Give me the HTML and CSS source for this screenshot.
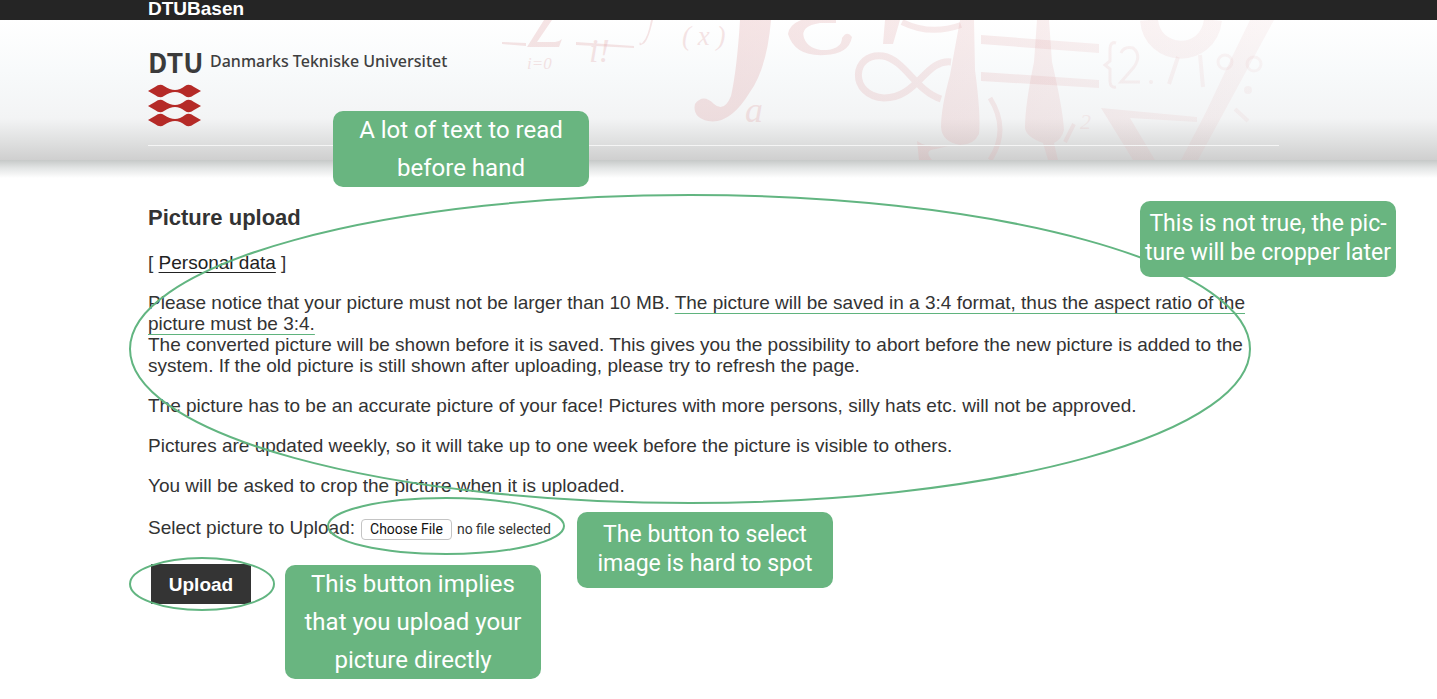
FILE: index.html
```html
<!DOCTYPE html>
<html lang="en">
<head>
<meta charset="utf-8">
<title>DTUBasen - Picture upload</title>
<link rel="stylesheet" href="styles.css">
</head>
<body>
<div class="topbar">DTUBasen</div>
<header class="banner">
  <svg class="banner-art" width="900" height="140" viewBox="500 20 900 140" aria-hidden="true">
    <defs>
      <linearGradient id="fade" gradientUnits="userSpaceOnUse" x1="500" y1="0" x2="1300" y2="0">
        <stop offset="0" stop-color="#dfa5a7" stop-opacity="0.3"/>
        <stop offset="0.3" stop-color="#dfa5a7" stop-opacity="0.3"/>
        <stop offset="0.65" stop-color="#dfa5a7" stop-opacity="0.2"/>
        <stop offset="0.8" stop-color="#dfa5a7" stop-opacity="0.14"/>
        <stop offset="1" stop-color="#dfa5a7" stop-opacity="0.09"/>
      </linearGradient>
    </defs>
    <g fill="url(#fade)">
      <path d="M546 20h6l-15 22h18q4 0 7-3l-3 8h-32l17-27z"/>
      <path d="M502 42l24 1v3l-24-2zM576 42l58 4v2l-58-3z"/>
      <path d="M651 20q-3 17-8 22-2 3-3 0-2 5 3 2 5-2 10-24z"/>
      <path d="M740 20H771Q767 68 750 92Q730 125 708 121Q692 117 695 104Q703 93 714 104Q724 113 731 96Q737 69 740 20Z"/>
      <path d="M788 34Q789 25 801 20H836V23H820Q800 26 804 38Q809 51 827 50Q842 48 842 38Q847 30 852 37Q849 54 825 55Q795 57 788 34Z"/>
      <path d="M885 20H900L893 44H883Z"/>
      <path d="M960 20H974L975 70Q981 115 979 134Q974 145 960 145Q942 142 941 127Q941 108 950 75Z"/>
      <path d="M1037 20H1049L1052 62Q1063 110 1064 130Q1062 139 1054 143L1058 160H1048L1043 143Q1026 137 1025 128Q1025 105 1034 62Z"/>
      <path d="M981 35L1099 44V53L981 44ZM981 72L1099 80V88L981 81Z"/>
      <path d="M917 141Q928 149 948 146L936 149Q923 150 932 160H919Z"/>
      <path d="M1101 108L1197 117V122L1130 118L1155 160H1133Z"/>
      <path d="M1250 20H1274L1198 160H1181L1206 112L1232 57Z"/>
    </g>
    <g fill="none" stroke="url(#fade)">
      <path stroke-width="6" d="M902 22Q930 36 961 25"/>
      <path stroke-width="7" d="M951 62C925 59 918 98 884 98C849 96 851 52 883 56C905 60 916 91 941 99"/>
      <path stroke-width="5" d="M990 98Q1010 130 990 160"/>
      <path stroke-width="18" d="M1149 20C1152 58 1208 61 1213 20"/>
      <path stroke-width="4" d="M1178 57L1169 84M1200 55L1203 87M1235 109L1248 121M1074 124L1065 142"/>
      <path stroke-width="3" d="M1116 43Q1110 41 1110 50V61L1105 65L1110 69V81Q1110 88 1116 87"/>
      <path stroke-width="3" d="M1121 53Q1124 46 1133 48Q1142 55 1134 67L1121 82H1140"/>
      <circle cx="1225" cy="62" r="7" stroke-width="3"/>
      <circle cx="1254" cy="64" r="7" stroke-width="3"/>
    </g>
    <g class="art-text" fill="url(#fade)">
      <text x="682" y="45" font-size="27">( x )</text>
      <text x="589" y="62" font-size="34">i!</text>
      <text x="527" y="69" font-size="17">i=0</text>
      <text x="745" y="122" font-size="36">a</text>
      <text x="1080" y="129" font-size="22">2</text>
      <circle cx="1151" cy="82" r="2"/>
      <circle cx="1248" cy="90" r="4"/>
    </g>
  </svg>
  <div class="banner-inner">
    <div class="logo">
      <span class="logo-word">DTU</span>
      <svg class="logo-mark" width="54" height="42" viewBox="0 0 54 42" aria-hidden="true">
        <defs><path id="bar" d="M0 6L7 2Q12-2 16 1Q22 5 27 5Q32 5 37 1Q41-2 46 2L53 6L46 10Q41 14 37 11Q32 7 27 7Q22 7 16 11Q12 14 7 10Z"/></defs>
        <g fill="#b52a27"><use href="#bar"/><use href="#bar" y="15"/><use href="#bar" y="29"/></g>
      </svg>
    </div>
    <div class="university">Danmarks Tekniske Universitet</div>
  </div>
</header>
<main class="content">
  <h1>Picture upload</h1>
  <p>[ <a href="#personal-data">Personal data</a> ]</p>
  <p>Please notice that your picture must not be larger than 10 MB. <span class="marked">The picture will be saved in a 3:4 format, thus the aspect ratio of the picture must be 3:4.</span><br>The converted picture will be shown before it is saved. This gives you the possibility to abort before the new picture is added to the system. If the old picture is still shown after uploading, please try to refresh the page.</p>
  <p>The picture has to be an accurate picture of your face! Pictures with more persons, silly hats etc. will not be approved.</p>
  <p>Pictures are updated weekly, so it will take up to one week before the picture is visible to others.</p>
  <p>You will be asked to crop the picture when it is uploaded.</p>
  <form>
    <div class="file-row">
      <label for="picture">Select picture to Upload:</label>
      <input class="file-input" type="file" id="picture">
      <label class="file-button" for="picture">Choose File</label>
      <span class="file-name">no file selected</span>
    </div>
    <button class="upload" type="button">Upload</button>
  </form>
</main>
<svg class="rings" width="1260" height="620" viewBox="0 0 1260 620" aria-hidden="true">
  <ellipse cx="690" cy="349" rx="560" ry="154"/>
  <ellipse cx="446" cy="526" rx="118" ry="28"/>
  <ellipse cx="202" cy="584" rx="72" ry="26"/>
</svg>
<aside class="note note-text">A lot of text to read<br>before hand</aside>
<aside class="note tight note-crop">This is not true, the pic-<br>ture will be cropper later</aside>
<aside class="note tight note-select">The button to select<br>image is hard to spot</aside>
<aside class="note note-upload">This button implies<br>that you upload your<br>picture directly</aside>
</body>
</html>
```
FILE: styles.css
```css
* { box-sizing: border-box; }
body {
  margin: 0;
  position: relative;
  min-height: 100vh;
  background: #fff;
  color: #333;
  font: 19px/21px "Liberation Sans", Arial, sans-serif;
}
.topbar {
  height: 20px;
  padding-left: 148px;
  background: #252525;
  color: #fff;
  font-weight: bold;
  line-height: 18px;
}
.banner {
  position: relative;
  height: 140px;
  padding: 26px 158px 0 148px;
  background: linear-gradient(#fff, #f8fafb 36%, #f3f4f5 70%, #e0e1e1 86%, #cfcfcf);
}
.banner::after {
  content: "";
  position: absolute;
  top: 100%;
  left: 0;
  right: 0;
  height: 18px;
  background: linear-gradient(#c6c9c8, #e3e5e5 45%, #fff);
}
.banner-art {
  position: absolute;
  top: 0;
  left: 500px;
}
.art-text { font-family: "Liberation Serif", serif; font-style: italic; }
.banner-inner {
  position: relative;
  display: flex;
  gap: 8px;
  height: 100px;
  border-bottom: 1px solid #f5f5f5;
}
.logo { width: 54px; }
.logo-word {
  display: block;
  height: 39px;
  color: #3b3b3b;
  font: bold 27px/32px "Noto Sans CJK JP", sans-serif;
}
.logo-mark { display: block; overflow: visible; }
.university {
  color: #3f3f3f;
  font: 500 16px/30px "Noto Sans", sans-serif;
}
.content { padding: 46px 158px 40px 148px; }
h1 { margin: 0 0 22px; font-size: 22px; line-height: 24px; }
p { margin: 0 0 19px; }
a { color: #222; text-underline-offset: 3px; text-decoration-thickness: 1px; }
.marked {
  text-decoration: underline 1px #5fb37d;
  text-underline-offset: 4px;
  text-decoration-skip-ink: none;
}
.file-row {
  display: flex;
  align-items: center;
  height: 24px;
}
.file-input {
  position: absolute;
  width: 1px;
  height: 1px;
  opacity: 0;
}
.file-button {
  margin: 4px 5px 0 6px;
  padding: 0 8px;
  border: 1px solid #c4c4c4;
  border-radius: 4px;
  background: #fff;
  color: #111;
  font: 14px/19px Roboto, sans-serif;
}
.file-name { margin-top: 4px; font: 14px/19px Roboto, sans-serif; }
.upload {
  display: block;
  width: 100px;
  height: 40px;
  margin: 25px 0 0 3px;
  border: 0;
  background: #343434;
  color: #fff;
  font: bold 19px/21px "Liberation Sans", Arial, sans-serif;
}
.rings {
  position: absolute;
  top: 0;
  left: 0;
  fill: none;
  stroke: #62b581;
  stroke-width: 2px;
  pointer-events: none;
}
.note {
  position: absolute;
  width: 256px;
  border-radius: 10px;
  background: #69b580;
  color: #fff;
  font: 24px/38px Roboto, sans-serif;
  text-align: center;
  white-space: nowrap;
}
.tight { padding: 8px 0 10px; font-size: 23px; line-height: 29px; }
.note-text { top: 111px; left: 333px; }
.note-crop { top: 201px; left: 1140px; }
.note-select { top: 512px; left: 577px; }
.note-upload { top: 565px; left: 285px; }
```
